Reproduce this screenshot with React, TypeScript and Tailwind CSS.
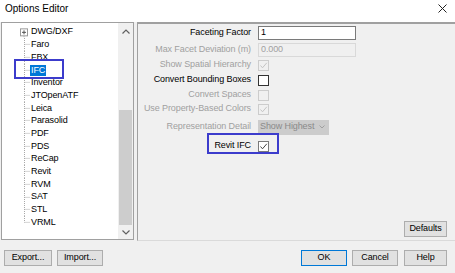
const font = { fontFamily: '"Liberation Sans", Arial, sans-serif' }

const items = ['DWG/DXF', 'Faro', 'FBX', 'IFC', 'Inventor', 'JTOpenATF', 'Leica', 'Parasolid', 'PDF', 'PDS', 'ReCap', 'Revit', 'RVM', 'SAT', 'STL', 'VRML']

const RH = 12.7

const Connector = ({ first, last }: { first?: boolean; last?: boolean }) => {
  const m = RH / 2
  return (
    <svg width="11" height={RH} className="shrink-0">
      {first ? (
        <>
          <rect x="0.5" y={m - 3.5} width="7" height="7" fill="white" stroke="#9a9a9a" />
          <line x1="2" y1={m} x2="6" y2={m} stroke="#555" />
          <line x1="4" y1={m - 2} x2="4" y2={m + 2} stroke="#555" />
          <line x1="4" y1={m + 3.5} x2="4" y2={RH} stroke="#a8a8a8" strokeDasharray="1 1" />
        </>
      ) : (
        <>
          <line x1="4.5" y1="0" x2="4.5" y2={last ? m : RH} stroke="#a8a8a8" strokeDasharray="1 1" />
          <line x1="4.5" y1={m} x2="10.5" y2={m} stroke="#a8a8a8" strokeDasharray="1 1" />
        </>
      )}
    </svg>
  )
}

const Chevron = ({ up }: { up?: boolean }) => (
  <svg width="8" height="5" viewBox="0 0 8 5">
    <path d={up ? 'M0.5 4.5 L4 1 L7.5 4.5' : 'M0.5 0.5 L4 4 L7.5 0.5'} fill="none" stroke="#606060" strokeWidth="1.2" />
  </svg>
)

const Check = ({ color }: { color: string }) => (
  <svg width="9" height="9" viewBox="0 0 9 9">
    <path d="M1.5 4.5 L3.5 6.8 L7.8 1.8" fill="none" stroke={color} strokeWidth="1" />
  </svg>
)

const Box = ({ checked, disabled, dark }: { checked?: boolean; disabled?: boolean; dark?: boolean }) => (
  <div
    className={
      disabled
        ? 'w-[11px] h-[11px] border border-[#cccccc] bg-[#f0f0f0] flex items-center justify-center'
        : dark
        ? 'w-[11px] h-[11px] border border-[#333333] bg-white flex items-center justify-center'
        : 'w-[11px] h-[11px] border border-[#7a7a7a] bg-white flex items-center justify-center'
    }
  >
    {checked && <Check color={disabled ? '#c4c4c4' : '#444'} />}
  </div>
)

const Row = ({ h, label, disabled, children }: { h: string; label: string; disabled?: boolean; children: React.ReactNode }) => (
  <div className={`flex items-center ${h}`}>
    <div className={disabled ? 'w-[113px] text-right text-[#a0a0a0] whitespace-nowrap' : 'w-[113px] text-right text-black whitespace-nowrap'}>
      {label}
    </div>
    <div className="ml-[7px] flex items-center">{children}</div>
  </div>
)

const Btn = ({ w, children, primary }: { w: string; children: React.ReactNode; primary?: boolean }) => (
  <button
    className={`${w} h-[16px] flex items-center justify-center bg-[#e1e1e1] text-black border ${
      primary ? 'border-[#0078d7]' : 'border-[#adadad]'
    }`}
  >
    {children}
  </button>
)

export default function App() {
  return (
    <div className="w-[455px] h-[273px] bg-[#f0f0f0] flex flex-col text-[9px] tracking-[-0.1px] overflow-hidden" style={font}>
      {/* title bar */}
      <div className="h-[22px] bg-white flex items-center justify-between shrink-0">
        <span className="ml-[5px] text-[10px] tracking-normal text-black -mt-[5px]">Options Editor</span>
        <svg width="9" height="9" viewBox="0 0 9 9" className="mr-[8px] -mt-[6px]">
          <path d="M0.5 0.5 L8.5 8.5 M8.5 0.5 L0.5 8.5" stroke="#222" strokeWidth="1" />
        </svg>
      </div>

      <div className="flex h-[219px] shrink-0">
        {/* tree */}
        <div className="relative ml-[1px] w-[133px] h-[218px] border border-[#a0a0a0] bg-white flex">
          <div className="flex-1 flex flex-col pt-[2.6px] pl-[18px]">
            {items.map((it, i) => (
              <div key={it} className="flex items-center h-[12.7px]">
                <Connector first={i === 0} last={i === items.length - 1} />
                {it === 'IFC' ? (
                  <span className="ml-[-1px] px-[1px] bg-[#0078d7] text-white leading-[11px]">{it}</span>
                ) : (
                  <span className="text-black leading-[11px]">{it}</span>
                )}
              </div>
            ))}
          </div>
          <div className="w-[15px] bg-[#f0f0f0] flex flex-col">
            <div className="h-[16px] flex items-center justify-center">
              <Chevron up />
            </div>
            <div className="flex-1 flex flex-col">
              <div className="mt-[71px] flex-1 mx-[1px] bg-[#cdcdcd]" />
            </div>
            <div className="h-[14px] flex items-center justify-center">
              <Chevron />
            </div>
          </div>
          <div className="absolute left-[12px] top-[36px] w-[50px] h-[20px] border-2 border-[#3c3ccc]" />
        </div>

        {/* options */}
        <div className="relative ml-[3px] flex-1 border-l border-t-2 border-b border-l-[#a0a0a0] border-t-[#a0a0a0] border-b-[#dadada] flex flex-col">
          <Row h="h-[18px]" label="Faceting Factor">
            <div className="w-[98px] h-[14px] bg-white border border-[#7a7a7a] flex items-center pl-[2px] text-black">1</div>
          </Row>
          <Row h="h-[16px]" label="Max Facet Deviation (m)" disabled>
            <div className="w-[98px] h-[14px] bg-[#f0f0f0] border border-[#d9d9d9] flex items-center pl-[2px] text-[#a0a0a0]">0.000</div>
          </Row>
          <Row h="h-[14px]" label="Show Spatial Hierarchy" disabled>
            <Box checked disabled />
          </Row>
          <Row h="h-[16px]" label="Convert Bounding Boxes">
            <Box dark />
          </Row>
          <Row h="h-[14px]" label="Convert Spaces" disabled>
            <Box disabled />
          </Row>
          <Row h="h-[14px]" label="Use Property-Based Colors" disabled>
            <Box checked disabled />
          </Row>
          <Row h="h-[22px]" label="Representation Detail" disabled>
            <div className="w-[71px] h-[15px] bg-[#cccccc] flex items-center justify-between pl-[2px] pr-[4px] text-[#8a8a8a]">
              <span>Show Highest</span>
              <svg width="6" height="4" viewBox="0 0 6 4">
                <path d="M0.5 0.5 L3 3 L5.5 0.5" fill="none" stroke="#a0a0a0" />
              </svg>
            </div>
          </Row>
          <Row h="h-[16px]" label="Revit IFC">
            <Box checked />
          </Row>
          <div className="absolute left-[69px] top-[109px] w-[72px] h-[21px] border-2 border-[#3c3ccc]" />
          <div className="mt-auto mb-[3px] self-end mr-[8px]">
            <Btn w="w-[43px]">Defaults</Btn>
          </div>
        </div>
      </div>

      {/* bottom buttons */}
      <div className="flex items-start pt-[9px]">
        <div className="ml-[4px]">
          <Btn w="w-[48px]">Export...</Btn>
        </div>
        <div className="ml-[5px]">
          <Btn w="w-[46px]">Import...</Btn>
        </div>
        <div className="flex-1" />
        <Btn w="w-[46px]" primary>OK</Btn>
        <div className="ml-[5px]">
          <Btn w="w-[46px]">Cancel</Btn>
        </div>
        <div className="ml-[6px] mr-[8px]">
          <Btn w="w-[43px]">Help</Btn>
        </div>
      </div>
    </div>
  )
}
